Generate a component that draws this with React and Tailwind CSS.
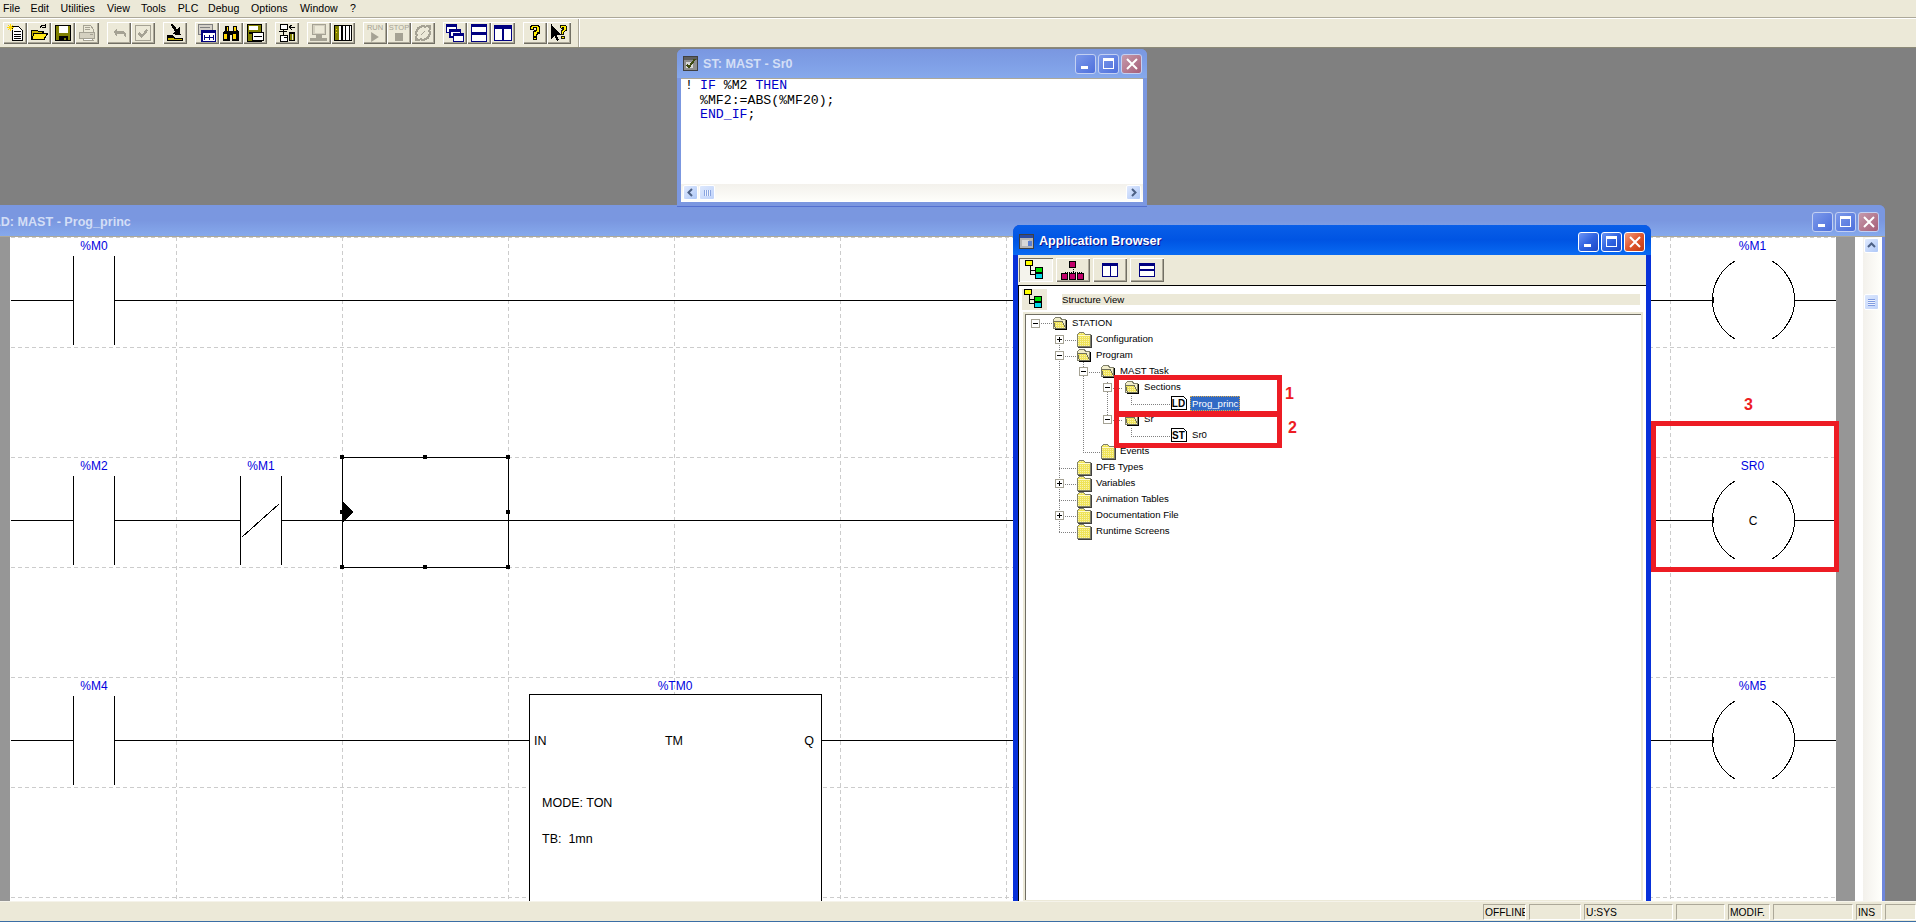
import React from "react";

const SANS = "font-['Liberation_Sans',Arial,sans-serif]";

/* ---------- toolbar icons (16x16 pixel style, drawn a little larger) ---------- */
const Ico = ({ children }) => (
  <svg width="18" height="18" viewBox="0 0 16 16" shapeRendering="crispEdges">{children}</svg>
);
const G = "#a5a294";
const icons = {
  new: <Ico><path d="M5.5 2.5h6l3 3v9h-9z" fill="#fff" stroke="#000"/><path d="M7 7h6M7 9h6M7 11h6M7 13h6" stroke="#000"/><path d="M1 3h6M4 0v6M2 1l4 4M6 1L2 5" stroke="#ffd800"/></Ico>,
  open: <Ico><path d="M1.5 5.5h5l1 1h4v7h-10z" fill="#c8b400" stroke="#000"/><path d="M3.5 8.5h12l-3 5h-11z" fill="#ffe81a" stroke="#000"/><path d="M9 3c1-2 3-2 5-1M14 0v3h-3" fill="none" stroke="#000"/></Ico>,
  save: <Ico><path d="M1.5 1.5h13v13h-13z" fill="#808000" stroke="#000"/><path d="M4 2h8v6H4z" fill="#fff"/><path d="M4 11h8v4H4z" fill="#000"/><path d="M9 12h2v2H9z" fill="#808000"/></Ico>,
  print: <Ico><path d="M4.5 1.5h7l2 3v4h-9z" fill="#ece9d8" stroke={G}/><path d="M1.5 7.5h13v5h-13z" fill="#d4d0c0" stroke={G}/><path d="M4.5 12.5h8l1 2h-9z" fill="#fff" stroke={G}/><path d="M6 3h5M6 5h5M11 9h2" stroke={G}/></Ico>,
  undo: <Ico><path d="M3 7l3-3v2h5c2 0 3 2 3 3v3l-2-3H6v2z" fill={G}/></Ico>,
  check: <Ico><path d="M1.5 1.5h13v13h-13z" fill="#ece9d8" stroke={G}/><path d="M4 8l3 3 5-6" fill="none" stroke={G} strokeWidth="2"/></Ico>,
  transfer: <Ico><path d="M4 0l2 0 4 5 2-2 1 7-7-1 2-2z" fill="#000"/><path d="M1 10h5l2 2h7v3H1z" fill="#000"/><path d="M2 12h4l1 1h7v1H2z" fill="#c8b400"/></Ico>,
  chart: <Ico><path d="M0.5 0.5h12v9h-12z" fill="#d4d0c8" stroke="#808080"/><path d="M2 3h9" stroke="#808080"/><path d="M3.5 5.5h12v10h-12z" fill="#fff" stroke="#000080"/><path d="M4 6h11v2H4z" fill="#000080"/><path d="M6 10v4M10 10v4M14 10v4M6 12h4M10 12h4" stroke="#000080"/></Ico>,
  binoc: <Ico><path d="M3 2h3v4h1v9H1V7h1zM10 2h3l1 4 1 1v8H9V6h1z" fill="#000"/><path d="M7 6h2v4H7z" fill="#000"/><path d="M2 9h2v4H2zM10 9h2v4h-2zM4 3h1v3H4zM11 3h1v3h-1z" fill="#ffd800"/></Ico>,
  memory: <Ico><path d="M1.5 0.5h12v15h-12z" fill="#808000" stroke="#000"/><path d="M3 2h8v3H3z" fill="#fff"/><path d="M5.5 7.5h10v7h-10z" fill="#fff" stroke="#000"/><path d="M7 11h7M3 8h2" stroke="#000"/></Ico>,
  tools: <Ico><path d="M2.5 0.5h6v4h-6zM2.5 10.5h6v5h-6z" fill="#fff" stroke="#000"/><path d="M5 5v5M1 7h7M10 3h5M12 1l-2 2 2 2M10 8h5v7h-5zM5 12h3" fill="none" stroke="#000"/><path d="M11 9h1v5h-1zM13 9h1v5h-1z" fill="#808000"/></Ico>,
  monitor: <Ico><path d="M2.5 0.5h11v9h-11z" fill="#d4d0c0" stroke={G}/><path d="M4 2h8v6H4z" fill="#ece9d8"/><path d="M5 10h6v2H5z" fill={G}/><path d="M0 12h15v3H0z" fill={G}/></Ico>,
  rack: <Ico><path d="M0.5 1.5h15v13h-15z" fill="#fff" stroke="#000"/><path d="M1 2h3v12H1z" fill="#808000"/><path d="M2 4h1v1H2zM2 7h1v1H2z" fill="#ffd800"/><path d="M6 2h2v12H6zM10 2h1v12h-1zM13 2h1v12h-1z" fill="#000"/></Ico>,
  init: <Ico><circle cx="8" cy="8" r="6" fill="none" stroke={G} strokeWidth="2"/><path d="M2 14L14 2" stroke="#ece9d8" strokeWidth="3"/><path d="M11 1h4v4zM1 11v4h4zM6 10l4-4" fill={G} stroke={G}/></Ico>,
  cascade: <Ico><path d="M0.5 0.5h9v7h-9z" fill="#fff" stroke="#000080"/><path d="M1 1h8v2H1z" fill="#000080"/><path d="M3.5 4.5h9v7h-9z" fill="#fff" stroke="#000080"/><path d="M4 5h8v2H4z" fill="#000080"/><path d="M6.5 8.5h9v7h-9z" fill="#fff" stroke="#000080"/><path d="M7 9h8v2H7z" fill="#000080"/></Ico>,
  hsplit: <Ico><path d="M1.5 0.5h13v15h-13z" fill="#fff" stroke="#000080"/><path d="M2 1h12v2H2zM2 8h12v2H2z" fill="#000080"/><path d="M1 7.5h14" stroke="#000080"/></Ico>,
  vsplit: <Ico><path d="M0.5 1.5h15v13h-15z" fill="#fff" stroke="#000080"/><path d="M1 2h14v2H1z" fill="#000080"/><path d="M8 2v12" stroke="#000080" strokeWidth="2"/></Ico>,
  help: <Ico><path d="M4 5V2h1V1h6v1h1v6h-2v1H9v2H7V7h1V6h1V3H7v2zM7 12h2v2H7z" fill="#ffee00" stroke="#000" strokeWidth="1"/></Ico>,
  helpTip: <Ico><path d="M1 0v14l3-3 2 4 2-1-2-4h4z" fill="#000"/><path d="M9 3V1h5v1h1v4h-2v1h-1v2h-2V6h1V5h1V3h-1v1z" fill="#ffee00" stroke="#000" strokeWidth=".8"/><path d="M10.5 11h2v2h-2z" fill="#ffee00" stroke="#000" strokeWidth=".8"/></Ico>,
};

const btnRaised = "shadow-[inset_1px_1px_0_#ffffff,inset_-1px_-1px_0_#716f64,inset_-2px_-2px_0_#aca899]";

const TextBtn = ({ label, shape }) => (
  <div className={`relative w-[24px] h-[22px] bg-[#ece9d8] flex flex-col items-center justify-start pt-[2px] ${btnRaised}`}>
    <span className={`${SANS} text-[7.5px] leading-[8px] text-[#a5a294]`}>{label}</span>
    {shape === "tri" ? (
      <svg width="10" height="10" viewBox="0 0 9 9"><path d="M1 0l7 4.5L1 9z" fill="#a5a294" /></svg>
    ) : (
      <div className="w-[8px] h-[8px] mt-[1px] bg-[#a5a294]" />
    )}
  </div>
);

const TB = ({ name }) => (
  <div className={`w-[24px] h-[22px] bg-[#ece9d8] flex items-center justify-center ${btnRaised}`}>{icons[name]}</div>
);

const menu = [
  ["File", "w-[27.6px]"], ["Edit", "w-[30px]"], ["Utilities", "w-[46.5px]"], ["View", "w-[34px]"], ["Tools", "w-[36.6px]"],
  ["PLC", "w-[30.4px]"], ["Debug", "w-[43px]"], ["Options", "w-[49px]"], ["Window", "w-[50px]"], ["?", "w-[10px]"],
];

const toolGroups = [
  ["new", "open", "save", "print"], ["undo", "check"], ["transfer"], ["chart", "binoc", "memory"], ["tools"],
  ["monitor", "rack"], ["RUN", "STOP", "init"], ["cascade", "hsplit", "vsplit"], ["help", "helpTip"],
];

/* ---------- XP window parts ---------- */
const WinBtn = ({ kind, active }) => {
  const bg = kind === "close"
    ? active ? "bg-linear-to-br from-[#f09a7c] via-[#e0562c] to-[#c23a10]" : "bg-linear-to-br from-[#c59aac] to-[#a65e78]"
    : active ? "bg-linear-to-br from-[#6d95f5] via-[#2f62e0] to-[#1c48c8]" : "bg-linear-to-br from-[#7c99ea] to-[#4e6fdc]";
  return (
    <div className={`w-[21px] h-[20px] rounded-[3px] border flex items-center justify-center ${active ? "border-white" : "border-[#c3d0f2]"} ${bg}`}>
      <svg width="14" height="14" viewBox="0 0 14 14" shapeRendering="crispEdges">
        {kind === "min" && <path d="M2 9h7v3H2z" fill="#fff" />}
        {kind === "max" && <path d="M1.5 1.5h10v10h-10z" fill="none" stroke="#fff" />}
        {kind === "max" && <path d="M1 1h11v3H1z" fill="#fff" />}
        {kind === "close" && <path d="M2 2l10 10M12 2L2 12" stroke="#fff" strokeWidth="2" shapeRendering="auto" />}
      </svg>
    </div>
  );
};

const WinBtns = ({ active }) => (
  <div className="flex gap-[2px]">
    <WinBtn kind="min" active={active} />
    <WinBtn kind="max" active={active} />
    <WinBtn kind="close" active={active} />
  </div>
);

const AppIcon = ({ st }) => (
  <svg width="15" height="15" viewBox="0 0 15 15" shapeRendering="crispEdges">
    <path d="M0.5 0.5h14v14h-14z" fill={st ? "#8e8e8e" : "#b5b5b5"} stroke="#404040" />
    <path d="M1 1h13v3H1z" fill={st ? "#5e5e5e" : "#2b4aa0"} />
    <path d="M3 6h7v6H3z" fill="#d8d8d8" />
    {st ? <path d="M4 9l2 2 6-8" fill="none" stroke="#3d4a10" strokeWidth="2" /> : <path d="M9 7h4v5H9z" fill="#5b7fd0" />}
  </svg>
);

const ScrollBtn = ({ dir }) => (
  <div className="w-[15px] h-[15px] shrink-0 rounded-[2px] border border-white bg-linear-to-br from-[#e1eafe] to-[#aec8f7] flex items-center justify-center">
    <svg width="9" height="9" viewBox="0 0 9 9">
      {dir === "left" && <path d="M6 1L2.5 4.5 6 8" fill="none" stroke="#4d6185" strokeWidth="2" />}
      {dir === "right" && <path d="M3 1l3.5 3.5L3 8" fill="none" stroke="#4d6185" strokeWidth="2" />}
      {dir === "up" && <path d="M1 6l3.5-3.5L8 6" fill="none" stroke="#4d6185" strokeWidth="2" />}
    </svg>
  </div>
);

/* ---------- ladder diagram ---------- */
const rows = [300, 520, 740];
const gridX = [176, 342, 508, 674, 840, 1006, 1172, 1338, 1504, 1670];
const gridY = [237, 347, 457, 567, 677, 787, 897];

const Contact = ({ x, y, closed, label }) => (
  <g>
    <path d={`M${x + 0.5} ${y - 44}V${y + 45}M${x + 41.5} ${y - 44}V${y + 45}`} stroke="#000" fill="none" />
    {closed && <path d={`M${x + 39} ${y - 16}L${x + 2} ${y + 17}`} stroke="#000" fill="none" />}
    <text x={x + 21} y={y - 50} textAnchor="middle" fontSize="12" fill="#0000e0">{label}</text>
  </g>
);

const Coil = ({ y, label, inner }) => (
  <g>
    <path d={`M1735 ${y - 39}A45 45 0 0 0 1735 ${y + 39}M1772 ${y - 39}A45 45 0 0 1 1772 ${y + 39}`} stroke="#000" fill="none" />
    <path d={`M1713.5 ${y - 3}v6M1794.5 ${y - 3}v6`} stroke="#000" />
    <text x="1752.5" y={y - 50} textAnchor="middle" fontSize="12" fill="#0000e0">{label}</text>
    {inner && <text x="1753" y={y + 5} textAnchor="middle" fontSize="12" fill="#000">{inner}</text>}
  </g>
);

const handles = [[342, 457], [425, 457], [508, 457], [342, 512], [508, 512], [342, 567], [425, 567], [508, 567]];

const Ladder = () => (
  <svg className={`block shrink-0 bg-white ${SANS}`} width="1826" height="665" viewBox="10 237 1826 665" shapeRendering="crispEdges">
    {gridX.map((x) => <path key={x} d={`M${x + 0.5} 237V902`} stroke="#cccccc" strokeDasharray="4 3" />)}
    {gridY.map((y) => <path key={y} d={`M11 ${y + 0.5}H1836`} stroke="#cccccc" strokeDasharray="4 3" />)}
    {rows.map((y) => (
      <path key={y} d={`M11 ${y + 0.5}H73M114 ${y + 0.5}H${y === 520 ? 240 : y === 740 ? 529 : 1713}M1795 ${y + 0.5}H1836`} stroke="#000" />
    ))}
    <path d="M281 520.5H1713M822 740.5H1713" stroke="#000" />
    <Contact x={73} y={300} label="%M0" />
    <Contact x={73} y={520} label="%M2" />
    <Contact x={240} y={520} closed label="%M1" />
    <Contact x={73} y={740} label="%M4" />
    <Coil y={300} label="%M1" />
    <Coil y={520} label="SR0" inner="C" />
    <Coil y={740} label="%M5" />
    <path d="M342.5 457.5H508.5V567.5H342.5Z" fill="none" stroke="#000" />
    <path d="M342 501L354 512L342 523Z" fill="#000" />
    {handles.map(([x, y]) => <rect key={`${x}-${y}`} x={x - 2} y={y - 2} width="4" height="4" fill="#000" />)}
    <path d="M529.5 694.5H821.5V902H529.5Z" fill="#fff" stroke="#000" />
    <path d="M500 740.5H529M822 740.5H860" stroke="#000" />
    <text x="675" y="690" textAnchor="middle" fontSize="12" fill="#0000e0">%TM0</text>
    <g fontSize="12.5" fill="#000">
      <text x="534" y="745">IN</text>
      <text x="674" y="745" textAnchor="middle">TM</text>
      <text x="814" y="745" textAnchor="end">Q</text>
      <text x="542" y="807">MODE: TON</text>
      <text x="542" y="843" xmlSpace="preserve">TB:  1mn</text>
    </g>
  </svg>
);

/* ---------- tree ---------- */
const Folder = ({ open }) => (
  <svg width="16" height="17" viewBox="0 0 16 17" shapeRendering="crispEdges">
    <defs>
      <pattern id="dith" width="2" height="2" patternUnits="userSpaceOnUse">
        <rect width="2" height="2" fill="#efe35a" />
        <rect width="1" height="1" fill="#f8f3b0" />
      </pattern>
    </defs>
    {open ? (
      <g>
        <path d="M3.5 2.5h5l1 2h4v9h-12v-9z" fill="#f2eecb" stroke="#80806a" />
        <path d="M1.5 6.5h9l3 7h-10z" fill="url(#dith)" stroke="#70705a" />
        <path d="M14 5v9H3" fill="none" stroke="#000" />
      </g>
    ) : (
      <g>
        <path d="M1.5 3.5l2-2h4l2 2h5v12h-13z" fill="url(#dith)" stroke="#80806a" />
        <path d="M2 4h12" stroke="#fffbd0" />
        <path d="M15 4v12H2" fill="none" stroke="#404040" />
      </g>
    )}
  </svg>
);

const Doc = ({ t }) => (
  <svg width="16" height="14" viewBox="0 0 16 14" className="block" shapeRendering="crispEdges">
    <path d="M0.5 0.5h12l3 3v10h-15z" fill="#fff" stroke="#000" />
    <path d="M0 13h16v1H0zM15 3h1v11h-1z" fill="#000" />
    <text x="7.5" y="11" textAnchor="middle" fontSize="10" fontWeight="700" fill="#000" className={SANS}>{t}</text>
  </svg>
);

const ExpBox = ({ plus }) => (
  <div className="w-[9px] h-[9px] shrink-0 bg-white border border-[#a5a294] relative">
    <div className="absolute left-[1px] top-[3px] w-[5px] h-[1px] bg-black" />
    {plus && <div className="absolute left-[3px] top-[1px] w-[1px] h-[5px] bg-black" />}
  </div>
);

const tree = [
  ["STATION", "pl-[6px]", "minus", true],
  ["Configuration", "pl-[30px]", "plus", false],
  ["Program", "pl-[30px]", "minus", true],
  ["MAST Task", "pl-[54px]", "minus", true],
  ["Sections", "pl-[78px]", "minus", true],
  ["Prog_princ", "pl-[146px]", "LD", false],
  ["Sr", "pl-[78px]", "minus", true],
  ["Sr0", "pl-[146px]", "ST", false],
  ["Events", "pl-[54px]", "none", false],
  ["DFB Types", "pl-[30px]", "none", false],
  ["Variables", "pl-[30px]", "plus", false],
  ["Animation Tables", "pl-[30px]", "none", false],
  ["Documentation File", "pl-[30px]", "plus", false],
  ["Runtime Screens", "pl-[30px]", "none", false],
];

const TreeRow = ({ label, pl, kind, open }) => {
  const leaf = kind === "LD" || kind === "ST";
  return (
    <div className={`relative h-[16px] flex items-center text-[9.6px] text-black whitespace-nowrap ${pl}`}>
      {leaf ? (
        <>
          <Doc t={kind} />
          {kind === "LD" ? (
            <span className="ml-[3px] h-[15px] px-[1px] leading-[14px] bg-[#316ac5] text-white border border-dotted border-[#d9a94c]">{label}</span>
          ) : (
            <span className="ml-[5px]">{label}</span>
          )}
        </>
      ) : (
        <>
          <div className="w-[9px] mr-[12px] shrink-0">{kind === "none" ? null : <ExpBox plus={kind === "plus"} />}</div>
          <Folder open={open} />
          <span className="ml-[4px]">{label}</span>
        </>
      )}
    </div>
  );
};

const TreeLines = () => (
  <svg className="absolute left-0 top-0" width="620" height="300" viewBox="1025 315 620 300" shapeRendering="crispEdges">
    <path
      d="M1039 323.5H1052M1059.5 335V532M1063 340.5H1076M1063 356.5H1076M1083.5 362V452M1087 372.5H1100M1083 452.5H1100M1107.5 382V420M1111 388.5H1123M1111 420.5H1123M1131.5 396V404M1131 404.5H1171M1131.5 428V436M1131 436.5H1171M1059 468.5H1076M1063 484.5H1076M1059 500.5H1076M1063 516.5H1076M1059 532.5H1076"
      stroke="#808080"
      strokeDasharray="1 1"
      fill="none"
    />
  </svg>
);

const TreeStruct = () => (
  <svg width="22" height="20" viewBox="0 0 22 20" shapeRendering="crispEdges">
    <path d="M5 6v8h7M5 10h7" stroke="#000" fill="none" />
    <path d="M0.5 0.5h7v5h-7z" fill="#ffff00" stroke="#000" />
    <path d="M10.5 7.5h7v5h-7z" fill="#00e000" stroke="#000" />
    <path d="M10.5 13.5h7v5h-7z" fill="#00d8e8" stroke="#000" />
  </svg>
);

const OrgIcon = () => (
  <svg width="24" height="19" viewBox="0 0 24 19" shapeRendering="crispEdges">
    <path d="M12 6v5M4 11h16M4 11v2M12 11v2M20 11v2" stroke="#000" strokeDasharray="1 1" fill="none" />
    <path d="M8.5 0.5h6v6h-6zM0.5 12.5h6v6h-6zM8.5 12.5h6v6h-6zM16.5 12.5h6v6h-6z" fill="#c0006a" stroke="#000" />
  </svg>
);

const Pane2V = () => (
  <svg width="16" height="14" viewBox="0 0 16 14" shapeRendering="crispEdges">
    <path d="M0.5 0.5h15v13h-15z" fill="#fff" stroke="#000080" />
    <path d="M1 1h14v1H1zM8 1v12" stroke="#000080" />
  </svg>
);

const BrowserBtn = ({ pressed, children }) => (
  <div className={`w-[34px] h-[24px] flex items-center justify-center ${pressed
    ? "bg-[#f4f3ec] shadow-[inset_1px_1px_0_#716f64,inset_-1px_-1px_0_#ffffff]"
    : `bg-[#ece9d8] ${btnRaised}`}`}>{children}</div>
);

/* ---------- status bar ---------- */
const Cell = ({ w, children }) => (
  <div className={`${w} h-[16px] border border-[#aca899] border-r-white border-b-white overflow-hidden whitespace-nowrap pl-[1px] leading-[15px] text-[10.3px] text-black`}>{children}</div>
);

export default function App() {
  return (
    <div className={`relative w-[1916px] h-[922px] overflow-hidden flex flex-col bg-[#808080] ${SANS}`}>
      {/* menu */}
      <div className="h-[17px] shrink-0 bg-[#ece9d8] flex items-center pl-[3px] text-[10.6px] text-black">
        {menu.map(([m, w]) => <div key={m} className={w}>{m}</div>)}
      </div>
      <div className="h-[1px] shrink-0 bg-[#aca899]" />
      <div className="h-[1px] shrink-0 bg-white" />
      {/* toolbar */}
      <div className="h-[29px] shrink-0 bg-[#ece9d8] border-b border-[#8c8a78] flex items-start pl-[3px] pt-[3px]">
        <div className="flex gap-[8px]">
          {toolGroups.map((g, i) => (
            <div key={i} className="flex">
              {g.map((n) =>
                n === "RUN" ? <TextBtn key={n} label="RUN" shape="tri" />
                : n === "STOP" ? <TextBtn key={n} label="STOP" shape="sq" />
                : <TB key={n} name={n} />
              )}
            </div>
          ))}
        </div>
        <div className="ml-[7px] -mt-[3px] h-[28px] w-[2px] border-l border-[#aca899] border-r border-r-white" />
      </div>

      {/* desktop */}
      <div className="relative flex-1 overflow-hidden bg-[#808080]">
        {/* ST window */}
        <div className="absolute left-[677px] top-[1px] w-[470px] h-[158px] rounded-t-[6px] bg-[#7b97e0] border-b border-[#5470d0] flex flex-col z-10">
          <div className="h-[29px] shrink-0 flex items-center pl-[6px] pr-[5px] bg-linear-to-b from-[#7a97e0] via-[#7f9fe6] to-[#86a9ec] rounded-t-[6px]">
            <AppIcon st />
            <span className="ml-[5px] mt-[2px] flex-1 text-[12.6px] font-bold text-[#d3def6]">ST: MAST - Sr0</span>
            <WinBtns />
          </div>
          <div className="flex-1 mx-[4px] mb-[4px] bg-white flex flex-col border-t border-[#aca899] min-h-0">
            <div className="flex-1 font-['Liberation_Mono',monospace] text-[13.2px] leading-[14.5px]">
              <div className="flex"><span className="w-[19px] pl-[4px]">!</span><span className="text-[#0000c8]">IF <span className="text-black">%M2</span> THEN</span></div>
              <div className="flex"><span className="w-[19px]" /><span className="text-black">%MF2:=ABS(%MF20);</span></div>
              <div className="flex"><span className="w-[19px]" /><span className="text-[#0000c8]">END_IF<span className="text-black">;</span></span></div>
            </div>
            <div className="h-[17px] mb-[1px] flex items-center justify-between px-[2px] bg-linear-to-b from-[#f3f1ec] to-[#fefefa]">
              <div className="flex items-center gap-[1px]">
                <ScrollBtn dir="left" />
                <div className="w-[16px] h-[15px] rounded-[2px] border border-white bg-linear-to-br from-[#dde8fd] to-[#c0d3fa] flex items-center justify-center">
                  <div className="w-[7px] h-[6px] bg-[repeating-linear-gradient(90deg,#8aa5e0_0,#8aa5e0_1px,#eef3fe_1px,#eef3fe_2px)]" />
                </div>
              </div>
              <ScrollBtn dir="right" />
            </div>
          </div>
        </div>

        {/* main ladder window */}
        <div className="absolute left-[-36px] top-[157px] w-[1921px] h-[745px] rounded-t-[6px] bg-[#6f87dc] flex flex-col">
          <div className="h-[32px] shrink-0 flex items-center pl-[6px] pr-[6px] pt-[3px] bg-linear-to-b from-[#7a97e0] via-[#7a97e0] to-[#86a9ec] rounded-t-[6px] border-b border-[#aca899]">
            <AppIcon st />
            <span className="ml-[8px] flex-1 text-[12.6px] font-bold text-[#d3def6]">LD: MAST - Prog_princ</span>
            <WinBtns />
          </div>
          <div className="flex-1 flex pl-[4px] pr-[3px] min-h-0">
            <div className="w-[42px] shrink-0 bg-[#969696]" />
            <Ladder />
            <div className="w-[19px] shrink-0 bg-[#969696]" />
            <div className="w-[8px] shrink-0 bg-white" />
            <div className="w-[17px] shrink-0 bg-linear-to-r from-[#f3f1ec] to-[#fefefa] flex flex-col items-center pt-[1px]">
              <ScrollBtn dir="up" />
              <div className="mt-[41px] w-[15px] h-[16px] rounded-[2px] border border-white bg-linear-to-br from-[#dde8fd] to-[#c0d3fa] flex items-center justify-center">
                <div className="w-[7px] h-[7px] bg-[repeating-linear-gradient(0deg,#7f9be0_0,#7f9be0_1px,#eef3fe_1px,#eef3fe_2px)]" />
              </div>
            </div>
            <div className="w-[2px] shrink-0 bg-white" />
          </div>
        </div>

        {/* application browser */}
        <div className="absolute left-[1013px] top-[177px] w-[638px] h-[677px] rounded-t-[7px] bg-[#0831d9] flex flex-col z-10">
          <div className="h-[30px] shrink-0 flex items-center pl-[6px] pr-[6px] pt-[3px] rounded-t-[7px] bg-linear-to-b from-[#0a5fe8] via-[#0054e3] to-[#0a6af2]">
            <AppIcon />
            <span className="ml-[5px] flex-1 text-[12.6px] font-bold text-white [text-shadow:1px_1px_0_#0f1089]">Application Browser</span>
            <WinBtns active />
          </div>
          <div className="flex-1 ml-[5px] mr-[5px] bg-[#ece9d8] flex flex-col min-h-0">
            <div className="h-[30px] shrink-0 flex gap-[3px] pl-[1px] pt-[3px]">
              <BrowserBtn pressed><TreeStruct /></BrowserBtn>
              <BrowserBtn><OrgIcon /></BrowserBtn>
              <BrowserBtn><Pane2V /></BrowserBtn>
              <BrowserBtn>
                <svg width="16" height="14" viewBox="0 0 16 14" shapeRendering="crispEdges">
                  <path d="M0.5 0.5h15v13h-15z" fill="#fff" stroke="#000080" />
                  <path d="M1 1h14v1H1zM1 6.5h14M1 7.5h14" stroke="#000080" />
                </svg>
              </BrowserBtn>
            </div>
            <div className="flex-1 bg-white border-t border-l border-black min-h-0 flex flex-col">
              <div className="h-[26px] shrink-0 flex items-center pl-[3px] pr-[6px]">
                <div className="w-[25px] h-[21px] bg-[#ece9d8] flex items-center justify-center"><TreeStruct /></div>
                <div className="ml-[15px] flex-1 h-[11px] bg-[#ece9d8] text-[9.6px] leading-[11px] text-black">Structure View</div>
              </div>
              <div className="flex-1 ml-[4px] mr-[3px] border-2 border-[#ece9d8] shadow-[inset_1px_1px_0_#716f64] min-h-0 pt-[1px]">
                <div className="relative">
                  <TreeLines />
                  <div className="relative">
                    {tree.map(([l, p, k, o]) => <TreeRow key={l} label={l} pl={p} kind={k} open={o} />)}
                  </div>
                </div>
              </div>
            </div>
          </div>
        </div>
      </div>

      {/* status bar */}
      <div className="h-[20px] shrink-0 bg-[#ece9d8] border-t border-[#f5f3ea] flex justify-end gap-[3px] pt-[2px] z-20">
        <Cell w="w-[43px]">OFFLINE</Cell>
        <Cell w="w-[52px]" />
        <Cell w="w-[89px]">U:SYS</Cell>
        <Cell w="w-[49px]" />
        <Cell w="w-[42px]">MODIF.</Cell>
        <Cell w="w-[80px]" />
        <Cell w="w-[26px]">INS</Cell>
        <Cell w="w-[31px]" />
      </div>
      <div className="h-[1px] shrink-0 bg-[#3a6ea5] z-20" />

      {/* red annotations */}
      <div className="absolute left-[1114px] top-[375px] w-[168px] h-[42px] border-[5px] border-[#ed1c24] z-30" />
      <div className="absolute left-[1114px] top-[411px] w-[168px] h-[37px] border-[5px] border-[#ed1c24] z-30" />
      <div className="absolute left-[1651px] top-[421px] w-[188px] h-[151px] border-[5px] border-[#ed1c24] z-30" />
      <span className="absolute left-[1285px] top-[385px] text-[16px] leading-[18px] font-bold text-[#ed1c24] z-30">1</span>
      <span className="absolute left-[1288px] top-[419px] text-[16px] leading-[18px] font-bold text-[#ed1c24] z-30">2</span>
      <span className="absolute left-[1744px] top-[396px] text-[16px] leading-[18px] font-bold text-[#ed1c24] z-30">3</span>
    </div>
  );
}
